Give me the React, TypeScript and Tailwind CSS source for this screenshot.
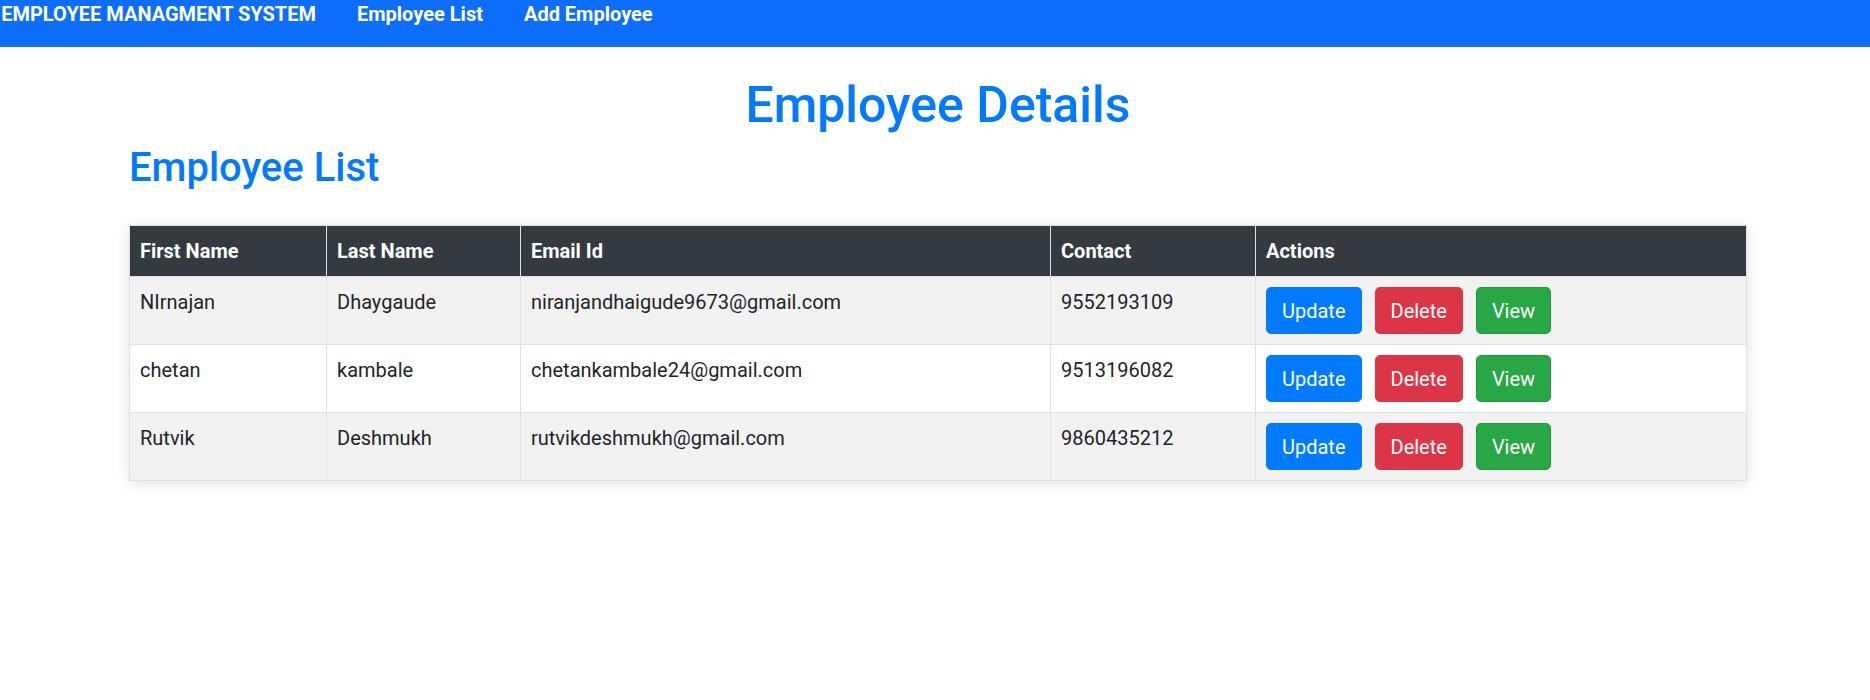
const employees = [
  { first: 'NIrnajan', last: 'Dhaygaude', email: 'niranjandhaigude9673@gmail.com', contact: '9552193109' },
  { first: 'chetan', last: 'kambale', email: 'chetankambale24@gmail.com', contact: '9513196082' },
  { first: 'Rutvik', last: 'Deshmukh', email: 'rutvikdeshmukh@gmail.com', contact: '9860435212' },
]

function Navbar() {
  return (
    <nav className="h-[47px] bg-[#0d6efd] flex items-start text-white font-bold text-[20px] leading-[28px]">
      <div className="w-[316px] overflow-hidden flex justify-end whitespace-nowrap">
        <a href="#">EMPLOYEE MANAGMENT SYSTEM</a>
      </div>
      <div className="ml-[41px] flex gap-[41px] whitespace-nowrap">
        <a href="#">Employee List</a>
        <a href="#">Add Employee</a>
      </div>
    </nav>
  )
}

function ActionButtons() {
  return (
    <div className="flex gap-[13px]">
      <button className="h-[47px] px-[15px] rounded-[5px] border border-[#007bff] bg-[#007bff] text-white text-[20px] leading-[30px]">
        Update
      </button>
      <button className="h-[47px] px-[15px] rounded-[5px] border border-[#dc3545] bg-[#dc3545] text-white text-[20px] leading-[30px]">
        Delete
      </button>
      <button className="h-[47px] px-[15px] rounded-[5px] border border-[#1f9a3b] bg-[#28a745] text-white text-[20px] leading-[30px]">
        View
      </button>
    </div>
  )
}

export default function App() {
  const th = 'border border-[#dee2e6] px-[10px] py-[10px] text-left font-bold align-top'
  const td = 'border border-[#dee2e6] px-[10px] py-[10px] align-top'

  return (
    <div className="min-h-[700px] bg-white font-[Roboto,sans-serif] text-[#212529]">
      <Navbar />

      <div className="ml-[129px] w-[1618px]">
        <h1 className="mt-[28px] text-center text-[50px] leading-[60px] font-medium text-[#007bff]">
          Employee Details
        </h1>
        <h2 className="mt-[9px] text-[40px] leading-[48px] font-medium text-[#007bff]">Employee List</h2>

        <div className="mt-[33px] shadow-[0_2px_14px_rgba(0,0,0,0.12)]">
          <table className="w-full table-fixed border-collapse text-[20px] leading-[30px]">
            <thead className="bg-[#343a40] text-white">
              <tr>
                <th className={`${th} w-[197px]`}>First Name</th>
                <th className={`${th} w-[194px]`}>Last Name</th>
                <th className={`${th} w-[530px]`}>Email Id</th>
                <th className={`${th} w-[205px]`}>Contact</th>
                <th className={th}>Actions</th>
              </tr>
            </thead>
            <tbody>
              {employees.map((e, i) => (
                <tr key={e.email} className={i % 2 === 0 ? 'bg-[#f2f2f2]' : 'bg-white'}>
                  <td className={td}>{e.first}</td>
                  <td className={td}>{e.last}</td>
                  <td className={td}>{e.email}</td>
                  <td className={td}>{e.contact}</td>
                  <td className="border border-[#dee2e6] pl-[10px] pr-[10px] py-[10px] align-top">
                    <ActionButtons />
                  </td>
                </tr>
              ))}
            </tbody>
          </table>
        </div>
      </div>
    </div>
  )
}
